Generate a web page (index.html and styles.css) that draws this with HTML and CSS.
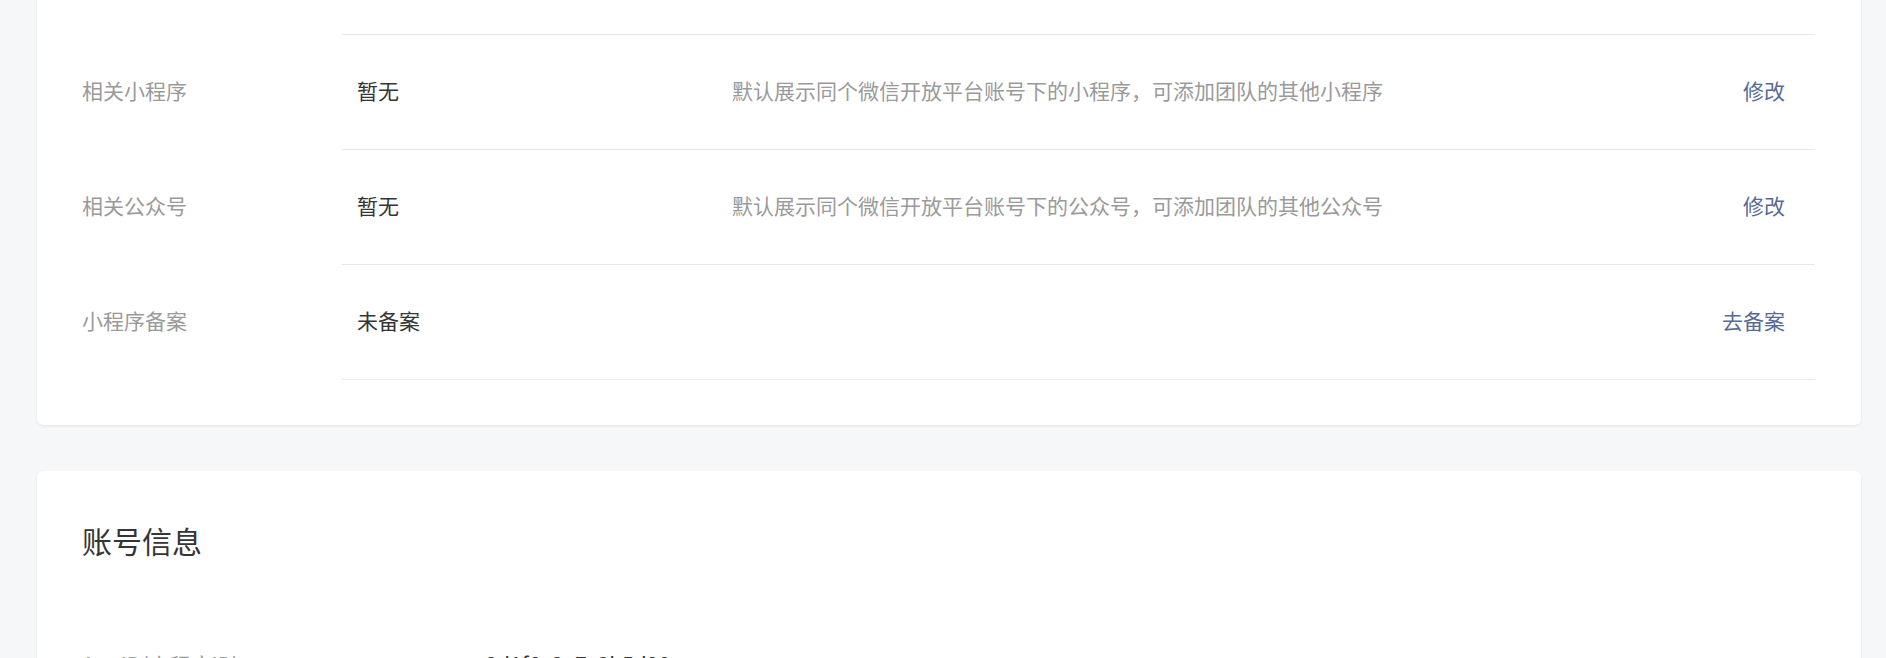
FILE: index.html
```html
<!DOCTYPE html>
<html lang="zh-CN">
<head>
<meta charset="utf-8">
<title>设置</title>
<link rel="stylesheet" href="styles.css">
</head>
<body>
<div class="page">
  <section class="card card-basic">
    <div class="row">
      <div class="label"></div>
      <div class="content"></div>
    </div>
    <div class="row">
      <div class="label">相关小程序</div>
      <div class="content">
        <div class="value">暂无</div>
        <div class="desc">默认展示同个微信开放平台账号下的小程序，可添加团队的其他小程序</div>
        <a class="link">修改</a>
      </div>
    </div>
    <div class="row">
      <div class="label">相关公众号</div>
      <div class="content">
        <div class="value">暂无</div>
        <div class="desc">默认展示同个微信开放平台账号下的公众号，可添加团队的其他公众号</div>
        <a class="link">修改</a>
      </div>
    </div>
    <div class="row">
      <div class="label">小程序备案</div>
      <div class="content">
        <div class="value">未备案</div>
        <div class="desc"></div>
        <a class="link">去备案</a>
      </div>
    </div>
  </section>

  <section class="card card-account">
    <h2 class="card-title">账号信息</h2>
    <div class="row row-plain">
      <div class="label label-wide">AppID(小程序ID)</div>
      <div class="content content-plain">
        <div class="value">wx8d1f6e2a7c3b5d90</div>
      </div>
    </div>
  </section>
</div>
</body>
</html>
```
FILE: styles.css
```css
* { box-sizing: border-box; }

html, body {
  margin: 0;
  padding: 0;
  background: #f6f7f9;
  height: 658px;
  overflow: hidden;
}

body {
  font-family: "Noto Sans CJK SC", "Noto Sans", sans-serif;
  font-size: 21px;
  color: #353535;
}

.page {
  margin-top: -80px;
  padding: 0 25px 0 37px;
  display: flex;
  flex-direction: column;
  gap: 46px;
}

.card {
  background: #ffffff;
  border-radius: 6px;
  box-shadow: 0 1px 3px rgba(0, 0, 0, 0.08);
  padding: 0 46px 45px 45px;
}

.row {
  display: flex;
  height: 115px;
}

.label {
  width: 260px;
  flex-shrink: 0;
  display: flex;
  align-items: center;
  padding-bottom: 5px;
  color: #9a9a9a;
}

.content {
  flex: 1;
  display: flex;
  align-items: center;
  border-bottom: 1px solid #e7e7eb;
  padding: 0 30px 5px 15px;
}

.value {
  width: 375px;
  flex-shrink: 0;
  color: #353535;
}

.desc {
  flex: 1;
  color: #9a9a9a;
}

.link {
  color: #576b95;
  text-decoration: none;
  cursor: pointer;
}

.card-account {
  padding-top: 45px;
}

.card-title {
  margin: 0;
  font-size: 30px;
  font-weight: 400;
  line-height: 48px;
  color: #353535;
}

.row-plain {
  margin-top: 45px;
}

.label-wide {
  width: 376px;
}

.content-plain {
  border-bottom: none;
  padding: 0 0 5px 0;
}
```
